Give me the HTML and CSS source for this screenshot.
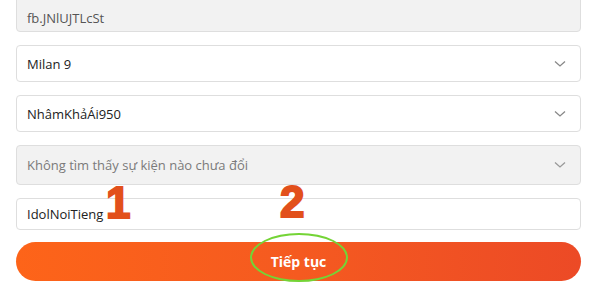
FILE: index.html
```html
<!DOCTYPE html>
<html lang="vi">
<head>
<meta charset="utf-8">
<link rel="stylesheet" href="styles.css">
</head>
<body>
<form class="form">
  <div class="field field-disabled f1"><span class="val">fb.JNlUJTLcSt</span></div>
  <div class="field f2"><span class="val">Milan 9</span><svg class="chev" viewBox="0 0 12 8" width="12" height="8"><path d="M1 1.5 L6 6 L11 1.5" fill="none" stroke="#888" stroke-width="1.3"/></svg></div>
  <div class="field f3"><span class="val">NhâmKhảÁi950</span><svg class="chev" viewBox="0 0 12 8" width="12" height="8"><path d="M1 1.5 L6 6 L11 1.5" fill="none" stroke="#888" stroke-width="1.3"/></svg></div>
  <div class="field field-disabled f4"><span class="val muted">Không tìm thấy sự kiện nào chưa đổi</span><svg class="chev" viewBox="0 0 12 8" width="12" height="8"><path d="M1 1.5 L6 6 L11 1.5" fill="none" stroke="#999" stroke-width="1.3"/></svg></div>
  <div class="field f5"><span class="val">IdolNoiTieng</span></div>
  <button type="button" class="btn">Tiếp tục</button>
  <span class="mark mark1">1</span>
  <span class="mark mark2">2</span>
  <span class="ring"></span>
</form>
</body>
</html>
```
FILE: styles.css
```css
* { box-sizing: border-box; }
html, body { margin: 0; padding: 0; background: #fff; }
body { width: 600px; height: 289px; overflow: hidden; font-family: "Open Sans", "Liberation Sans", sans-serif; }
.form {
  position: relative;
  display: flex;
  flex-direction: column;
  gap: 13px;
  margin-top: -5px;
  padding: 0 19px 0 16px;
}
.field {
  display: flex;
  align-items: center;
  justify-content: space-between;
  height: 37px;
  padding: 0 14px 0 10px;
  border: 1px solid #dedede;
  border-radius: 4px;
  background: #fff;
  font-size: 13px;
  color: #222;
}
.field-disabled { background: #f2f2f2; color: #555; }
.f1 .val { padding-top: 9px; }
.f4 { height: 40px; }
.f5 { height: 32px; }
.muted { color: #7a7a7a; }
.chev { flex: none; }
.btn {
  margin-top: -1px;
  height: 39px;
  border: none;
  border-radius: 20px;
  background: linear-gradient(90deg, #fd6419 0%, #f55a20 50%, #ec4a26 100%);
  color: #fff;
  font-family: "Open Sans", "Liberation Sans", sans-serif;
  font-weight: 700;
  font-size: 14px;
  padding: 0;
}
.mark {
  position: absolute;
  font-family: "Liberation Sans Narrow", "Liberation Sans", sans-serif;
  font-weight: 700;
  color: #e2501b;
  line-height: 1;
  font-size: 44px;
  -webkit-text-stroke: 2px #e2501b;
}
.mark1 { left: 106px; top: 186px; }
.mark2 { left: 280px; top: 185px; }
.ring {
  position: absolute;
  left: 250px;
  top: 238px;
  width: 98px;
  height: 49px;
  border: 2px solid #74d436;
  border-radius: 50%;
}
```
